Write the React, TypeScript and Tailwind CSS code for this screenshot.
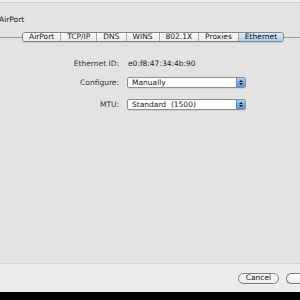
const tabs = ["AirPort", "TCP/IP", "DNS", "WINS", "802.1X", "Proxies", "Ethernet"];

function Popup({ value }: { value: string }) {
  return (
    <div className="flex h-[11px] w-[119px] items-stretch overflow-hidden rounded-[2px] border border-[#8e8e8e] bg-white shadow-[0_1px_0_rgba(0,0,0,0.08)]">
      <div className="flex flex-1 items-center whitespace-pre pl-[4px] leading-none text-[#1a1a1a]">{value}</div>
      <div className="flex w-[9px] flex-col items-center justify-center gap-[1px] border-l border-[#5f8fc9] bg-gradient-to-b from-[#a9d0f5] to-[#4f95e2]">
        <svg width="4" height="2" viewBox="0 0 4 2"><path d="M0 2 L2 0 L4 2 Z" fill="#111" /></svg>
        <svg width="4" height="2" viewBox="0 0 4 2"><path d="M0 0 L2 2 L4 0 Z" fill="#111" /></svg>
      </div>
    </div>
  );
}

export default function App() {
  return (
    <div
      className="flex h-[300px] w-[300px] flex-col overflow-hidden bg-[#e3e3e3] text-[7.5px] text-[#222]"
      style={{ fontFamily: '"DejaVu Sans", "Liberation Sans", sans-serif' }}
    >
      {/* window top edge */}
      <div className="h-[3px] border-b border-[#d0d0d0] bg-[#ededed]" />

      {/* title */}
      <div className="ml-[-1px] mt-[12px] h-[9px] leading-[9px] text-[#111]">AirPort</div>

      {/* tab strip */}
      <div className="mt-[8px] flex items-center">
        <div className="h-px w-[22px] bg-[#9a9a9a]" />
        <div className="flex h-[10px] items-stretch overflow-hidden rounded-[3px] border border-[#858585] shadow-[0_1px_0_rgba(0,0,0,0.1)]">
          {tabs.map((t, i) => (
            <div
              key={t}
              className={
                "flex items-center px-[6px] leading-none " +
                (i > 0 ? "border-l border-[#a8a8a8] " : "") +
                (t === "Ethernet"
                  ? "bg-gradient-to-b from-[#dcecfc] to-[#a5cdf3] text-[#0a0a0a]"
                  : "bg-gradient-to-b from-[#fdfdfd] to-[#e9e9e9] text-[#1a1a1a]")
              }
            >
              {t}
            </div>
          ))}
        </div>
        <div className="h-px flex-1 bg-[#9a9a9a]" />
      </div>

      {/* form */}
      <div className="mt-[17px] flex flex-col">
        <div className="flex h-[10px] items-center">
          <div className="w-[120px] pr-[1px] text-right text-[#333]">Ethernet ID:</div>
          <div className="ml-[8px] text-[#222]">e0:f8:47:34:4b:90</div>
        </div>
        <div className="mt-[8px] flex h-[11px] items-center">
          <div className="w-[120px] pr-[1px] text-right text-[#333]">Configure:</div>
          <div className="ml-[7px]">
            <Popup value="Manually" />
          </div>
        </div>
        <div className="mt-[11px] flex h-[11px] items-center">
          <div className="w-[120px] pr-[1px] text-right text-[#333]">MTU:</div>
          <div className="ml-[7px]">
            <Popup value="Standard  (1500)" />
          </div>
        </div>
      </div>

      <div className="flex-1" />

      {/* bottom bar */}
      <div className="flex h-[29px] items-center justify-end gap-[7px] border-t border-[#d4d4d4] bg-[#ececec]">
        <div className="flex h-[11px] w-[41px] items-center justify-center rounded-full border border-[#7a7a7a] bg-gradient-to-b from-white to-[#ececec] leading-none text-[#111]">
          Cancel
        </div>
        <div className="h-[11px] w-[14px] rounded-l-full border border-r-0 border-[#7a7a7a] bg-gradient-to-b from-white to-[#ececec]" />
      </div>
      <div className="h-[8px] bg-black" />
    </div>
  );
}
